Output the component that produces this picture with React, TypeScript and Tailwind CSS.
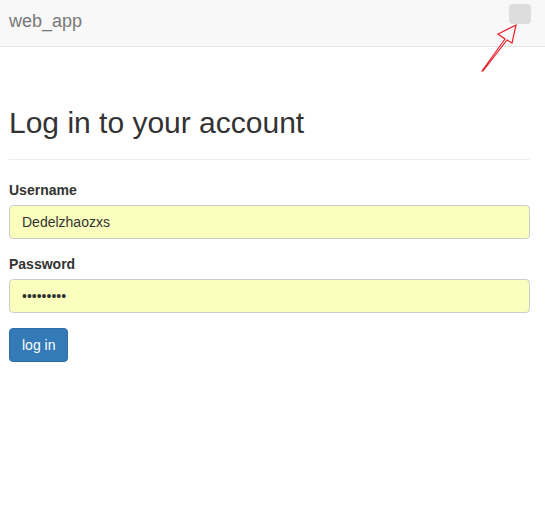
export default function App() {
  return (
    <div className="relative min-h-[527px] bg-white font-['Liberation_Sans',Arial,sans-serif] text-[14px] text-[#333]">
      <nav className="flex h-[47px] items-start justify-between border-b border-[#e7e7e7] bg-[#f8f8f8] pl-[9px] pr-[14px]">
        <span className="mt-[11px] text-[18px] leading-[20px] text-[#777]">web_app</span>
        <button className="mt-[4px] h-[20px] w-[22px] rounded-[4px] bg-[#ddd]"></button>
      </nav>

      <div className="px-[9px] pr-[15px]">
        <h1 className="mt-[59px] text-[30px] leading-[33px] font-normal">Log in to your account</h1>
        <hr className="mt-[20px] mb-[20px] border-t border-[#eee]" />

        <form>
          <div className="mb-[15px]">
            <label className="mb-[5px] block text-[14px] leading-[20px] font-bold">Username</label>
            <input
              type="text"
              readOnly
              value="Dedelzhaozxs"
              className="block h-[34px] w-full rounded-[4px] border border-[#ccc] bg-[#faffbd] px-[12px] text-[14px] text-[#333] outline-none"
            />
          </div>
          <div className="mb-[15px]">
            <label className="mb-[5px] block text-[14px] leading-[20px] font-bold">Password</label>
            <input
              type="password"
              readOnly
              value="123456789"
              className="block h-[34px] w-full rounded-[4px] border border-[#ccc] bg-[#faffbd] px-[12px] text-[14px] text-[#333] outline-none"
            />
          </div>
          <button
            type="button"
            className="h-[34px] rounded-[4px] border border-[#2e6da4] bg-[#337ab7] px-[12px] text-[14px] leading-[20px] text-white"
          >
            log in
          </button>
        </form>
      </div>

      {/* annotation arrow */}
      <svg className="pointer-events-none absolute left-0 top-0" width="545" height="100">
        <polygon
          points="482,71 505,39 498,34 516,25 512,43 507,40 483,71"
          fill="none"
          stroke="#e8202a"
          strokeWidth="1.2"
          strokeLinejoin="miter"
        />
      </svg>
    </div>
  )
}
